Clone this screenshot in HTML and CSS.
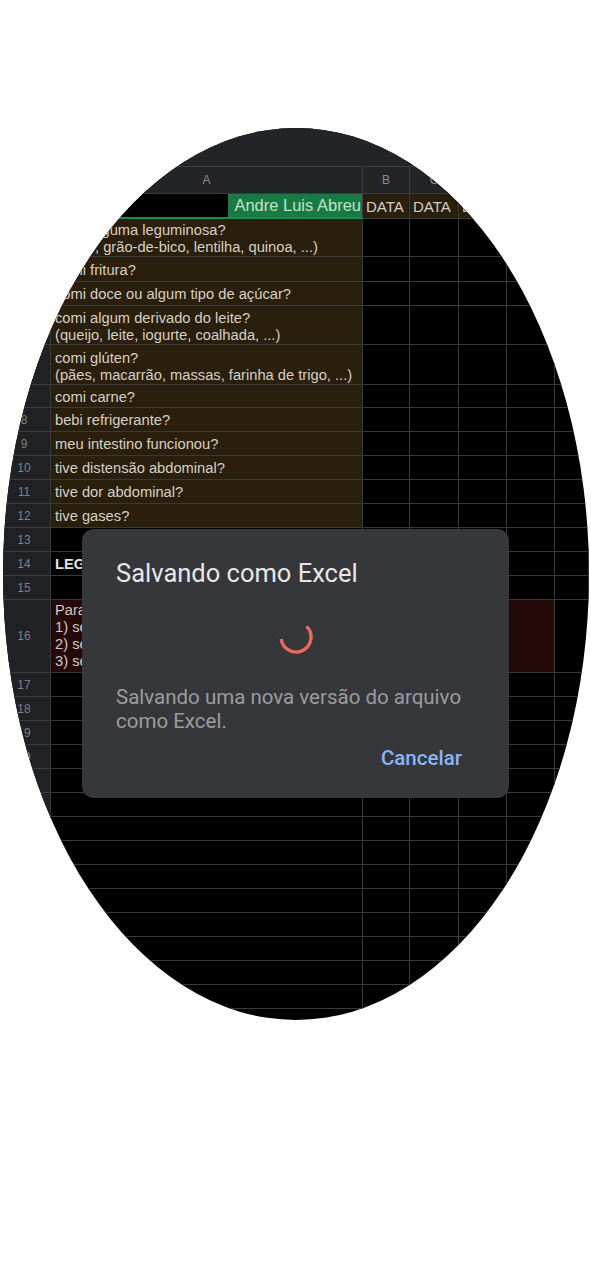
FILE: index.html
```html
<!DOCTYPE html>
<html lang="pt">
<head>
<meta charset="utf-8">
<title>Salvando como Excel</title>
<link rel="stylesheet" href="styles.css">
</head>
<body>
<div class="frame">
  <div class="oval">
    <div class="toolbar"></div>
    <div class="row colhead">
      <div class="rh"></div>
      <div class="c ca">A</div>
      <div class="c cb">B</div>
      <div class="c cc">C</div>
      <div class="c cd">D</div>
      <div class="c ce">E</div>
      <div class="c cf">F</div>
    </div>
    <div class="row h25">
      <div class="rh">1</div>
      <div class="c ca split"><span class="blk"></span><span class="name">Andre Luis Abreu</span></div>
      <div class="c cb brown data">DATA</div>
      <div class="c cc brown data">DATA</div>
      <div class="c cd brown data">DATA</div>
      <div class="c ce brown data"></div>
      <div class="c cf brown data"></div>
    </div>
    <div class="row h38">
      <div class="rh">2</div>
      <div class="c ca brown multi"><span>comi alguma leguminosa?</span><span>(feijão, grão-de-bico, lentilha, quinoa, ...)</span></div>
      <div class="c cb"></div><div class="c cc"></div><div class="c cd"></div><div class="c ce"></div><div class="c cf"></div>
    </div>
    <div class="row h25">
      <div class="rh">3</div>
      <div class="c ca brown">comi fritura?</div>
      <div class="c cb"></div><div class="c cc"></div><div class="c cd"></div><div class="c ce"></div><div class="c cf"></div>
    </div>
    <div class="row">
      <div class="rh">4</div>
      <div class="c ca brown">comi doce ou algum tipo de açúcar?</div>
      <div class="c cb"></div><div class="c cc"></div><div class="c cd"></div><div class="c ce"></div><div class="c cf"></div>
    </div>
    <div class="row h39">
      <div class="rh">5</div>
      <div class="c ca brown multi"><span>comi algum derivado do leite?</span><span>(queijo, leite, iogurte, coalhada, ...)</span></div>
      <div class="c cb"></div><div class="c cc"></div><div class="c cd"></div><div class="c ce"></div><div class="c cf"></div>
    </div>
    <div class="row h40">
      <div class="rh">6</div>
      <div class="c ca brown multi"><span>comi glúten?</span><span>(pães, macarrão, massas, farinha de trigo, ...)</span></div>
      <div class="c cb"></div><div class="c cc"></div><div class="c cd"></div><div class="c ce"></div><div class="c cf"></div>
    </div>
    <div class="row h23">
      <div class="rh">7</div>
      <div class="c ca brown">comi carne?</div>
      <div class="c cb"></div><div class="c cc"></div><div class="c cd"></div><div class="c ce"></div><div class="c cf"></div>
    </div>
    <div class="row">
      <div class="rh">8</div>
      <div class="c ca brown">bebi refrigerante?</div>
      <div class="c cb"></div><div class="c cc"></div><div class="c cd"></div><div class="c ce"></div><div class="c cf"></div>
    </div>
    <div class="row">
      <div class="rh">9</div>
      <div class="c ca brown">meu intestino funcionou?</div>
      <div class="c cb"></div><div class="c cc"></div><div class="c cd"></div><div class="c ce"></div><div class="c cf"></div>
    </div>
    <div class="row">
      <div class="rh">10</div>
      <div class="c ca brown">tive distensão abdominal?</div>
      <div class="c cb"></div><div class="c cc"></div><div class="c cd"></div><div class="c ce"></div><div class="c cf"></div>
    </div>
    <div class="row">
      <div class="rh">11</div>
      <div class="c ca brown">tive dor abdominal?</div>
      <div class="c cb"></div><div class="c cc"></div><div class="c cd"></div><div class="c ce"></div><div class="c cf"></div>
    </div>
    <div class="row">
      <div class="rh">12</div>
      <div class="c ca brown">tive gases?</div>
      <div class="c cb"></div><div class="c cc"></div><div class="c cd"></div><div class="c ce"></div><div class="c cf"></div>
    </div>
    <div class="row">
      <div class="rh">13</div>
      <div class="c ca"></div>
      <div class="c cb"></div><div class="c cc"></div><div class="c cd"></div><div class="c ce"></div><div class="c cf"></div>
    </div>
    <div class="row">
      <div class="rh">14</div>
      <div class="c ca bold">LEGENDA</div>
      <div class="c cb"></div><div class="c cc"></div><div class="c cd"></div><div class="c ce"></div><div class="c cf"></div>
    </div>
    <div class="row">
      <div class="rh">15</div>
      <div class="c ca"></div>
      <div class="c cb"></div><div class="c cc"></div><div class="c cd"></div><div class="c ce"></div><div class="c cf"></div>
    </div>
    <div class="row h73">
      <div class="rh">16</div>
      <div class="c cspan red multi"><span>Para cada pergunta:</span><span>1) se sim, marque X</span><span>2) se não, deixe vazio</span><span>3) se não sei, marque ?</span></div>
      <div class="c cf"></div>
    </div>
    <div class="row"><div class="rh">17</div><div class="c ca"></div><div class="c cb"></div><div class="c cc"></div><div class="c cd"></div><div class="c ce"></div><div class="c cf"></div></div>
    <div class="row"><div class="rh">18</div><div class="c ca"></div><div class="c cb"></div><div class="c cc"></div><div class="c cd"></div><div class="c ce"></div><div class="c cf"></div></div>
    <div class="row"><div class="rh">19</div><div class="c ca"></div><div class="c cb"></div><div class="c cc"></div><div class="c cd"></div><div class="c ce"></div><div class="c cf"></div></div>
    <div class="row"><div class="rh">20</div><div class="c ca"></div><div class="c cb"></div><div class="c cc"></div><div class="c cd"></div><div class="c ce"></div><div class="c cf"></div></div>
    <div class="row"><div class="rh">21</div><div class="c ca"></div><div class="c cb"></div><div class="c cc"></div><div class="c cd"></div><div class="c ce"></div><div class="c cf"></div></div>
    <div class="row"><div class="rh">22</div><div class="c ca"></div><div class="c cb"></div><div class="c cc"></div><div class="c cd"></div><div class="c ce"></div><div class="c cf"></div></div>
    <div class="row"><div class="rh">23</div><div class="c ca"></div><div class="c cb"></div><div class="c cc"></div><div class="c cd"></div><div class="c ce"></div><div class="c cf"></div></div>
    <div class="row"><div class="rh">24</div><div class="c ca"></div><div class="c cb"></div><div class="c cc"></div><div class="c cd"></div><div class="c ce"></div><div class="c cf"></div></div>
    <div class="row"><div class="rh">25</div><div class="c ca"></div><div class="c cb"></div><div class="c cc"></div><div class="c cd"></div><div class="c ce"></div><div class="c cf"></div></div>
    <div class="row"><div class="rh">26</div><div class="c ca"></div><div class="c cb"></div><div class="c cc"></div><div class="c cd"></div><div class="c ce"></div><div class="c cf"></div></div>
    <div class="row"><div class="rh">27</div><div class="c ca"></div><div class="c cb"></div><div class="c cc"></div><div class="c cd"></div><div class="c ce"></div><div class="c cf"></div></div>
    <div class="row"><div class="rh">28</div><div class="c ca"></div><div class="c cb"></div><div class="c cc"></div><div class="c cd"></div><div class="c ce"></div><div class="c cf"></div></div>
    <div class="row"><div class="rh">29</div><div class="c ca"></div><div class="c cb"></div><div class="c cc"></div><div class="c cd"></div><div class="c ce"></div><div class="c cf"></div></div>
    <div class="row"><div class="rh">30</div><div class="c ca"></div><div class="c cb"></div><div class="c cc"></div><div class="c cd"></div><div class="c ce"></div><div class="c cf"></div></div>

    <div class="dialog" role="dialog">
      <h1 class="dtitle">Salvando como Excel</h1>
      <div class="spinner">
        <svg width="36" height="36" viewBox="0 0 36 36"><path d="M28.61 7.39 A15 15 0 1 1 3.15 20.09" fill="none" stroke="#ee675c" stroke-width="3.4"/></svg>
      </div>
      <p class="dmsg">Salvando uma nova versão do arquivo como Excel.</p>
      <div class="dactions"><span class="dbtn">Cancelar</span></div>
    </div>
  </div>
</div>
</body>
</html>
```

FILE: styles.css
```css
* { box-sizing: border-box; margin: 0; padding: 0; }
html, body { background: #ffffff; }
body { font-family: "Liberation Sans", Arial, sans-serif; }

.frame { padding: 128px 0 0 3px; height: 1280px; }

.oval {
  position: relative;
  width: 586px;
  height: 892px;
  border-radius: 50%;
  overflow: hidden;
  background: #000;
}

.toolbar { height: 39px; background: #232427; border-bottom: 1px solid #3c3d40; }

.row { display: flex; height: 24px; }
.h23 { height: 23px; }
.h25 { height: 25px; }
.h38 { height: 38px; }
.h39 { height: 39px; }
.h40 { height: 40px; }
.h73 { height: 73px; }

.rh {
  flex: none;
  width: 48px;
  background: #202124;
  border-bottom: 1px solid #3b3c3f;
  border-right: 1px solid #3a3a3a;
  color: #7e7f82;
  font-size: 12px;
  display: flex;
  align-items: center;
  justify-content: center;
  padding-right: 5px;
}

.c {
  flex: none;
  border-right: 1px solid #3a3a3a;
  border-bottom: 1px solid #3a3a3a;
  font-size: 14.7px;
  color: #d6cfc3;
  padding-left: 4px;
  padding-top: 1px;
  display: flex;
  align-items: center;
  white-space: nowrap;
  overflow: hidden;
}
.ca { width: 312px; }
.cb { width: 47px; }
.cc { width: 49px; }
.cd { width: 48px; }
.ce { width: 48px; }
.cf { flex: 1; }
.cspan { width: 504px; }

.colhead { height: 27px; background: #232427; }
.colhead .rh { background: #232427; }
.colhead .c { justify-content: center; padding: 0; color: #8a8b8e; font-size: 12px; }

.brown { background: #2a1f0d; }
.data { padding-left: 3px; font-size: 15px; }
.red { background: #250908; color: #d3c8c6; }
.bold { font-weight: bold; color: #e2e2e2; }

.multi {
  flex-direction: column;
  align-items: flex-start;
  justify-content: flex-end;
  line-height: 16.5px;
  padding-top: 0;
  padding-bottom: 1px;
}
.red.multi { justify-content: center; line-height: 17px; }

.split { padding: 0; border-bottom: 2px solid #1f8a4c; }
.split .blk { flex: 1; height: 100%; background: #000; }
.split .name {
  width: 134px;
  height: 100%;
  background: #1b7a43;
  color: #bfe2cb;
  font-size: 16.5px;
  display: flex;
  align-items: center;
  justify-content: flex-end;
  padding-right: 1px;
}

.dialog {
  position: absolute;
  left: 79px;
  top: 401px;
  width: 427px;
  height: 269px;
  background: #36373a;
  border-radius: 12px;
  padding: 29px 40px 0 34px;
  font-family: Roboto, "Noto Sans", sans-serif;
}
.dtitle { font-size: 25.5px; font-weight: 400; line-height: 30px; color: #e6e7e9; }
.spinner { display: flex; justify-content: center; margin: 31px 0 0 6px; height: 36px; }
.spinner svg { display: block; }
.dmsg { margin-top: 30px; font-size: 20.5px; line-height: 24px; color: #9a9ca0; }
.dactions { display: flex; justify-content: flex-end; margin-top: 13px; padding-right: 7px; }
.dbtn { font-size: 20.5px; line-height: 24px; font-weight: 500; color: #8ab4f8; }
```
